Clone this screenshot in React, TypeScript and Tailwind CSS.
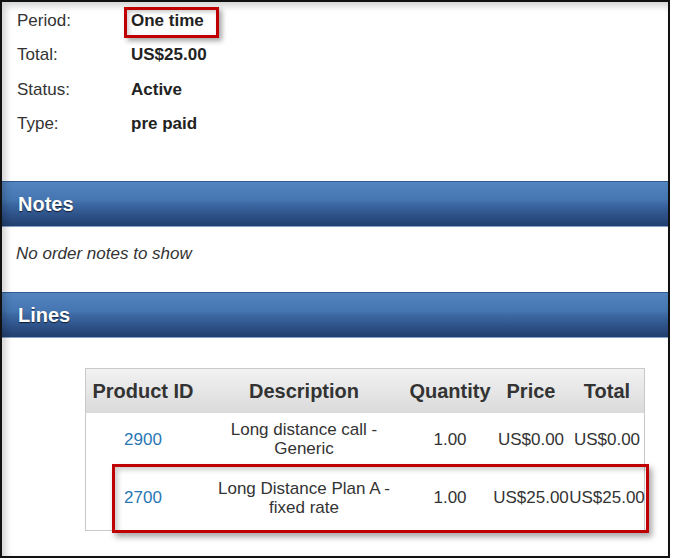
import React from "react";

const bar =
  "h-[46px] flex items-center pl-[16px] border-t border-t-[#2f5a92] border-b border-b-[#86a2c8] bg-[linear-gradient(to_bottom,#5384bf_0%,#4676b1_40%,#3b67a1_52%,#2e5289_75%,#223f6e_100%)] text-white font-bold text-[20px] [text-shadow:0_1px_1px_rgba(0,0,0,0.7)]";

function InfoRow({ label, value }: { label: string; value: string }) {
  return (
    <div className="h-[34.5px] flex items-center">
      <div className="w-[114px] text-[#333]">{label}</div>
      <div className="font-bold text-[#222]">{value}</div>
    </div>
  );
}

export default function App() {
  return (
    <div className="w-[673px] h-[560px] bg-white relative font-['Liberation_Sans',Arial,sans-serif] text-[17px]">
      <div className="w-[670px] h-[558px] border-2 border-[#111] flex flex-col relative overflow-hidden">
        <div className="h-[179px] pt-[1px] pl-[15px]">
          <InfoRow label="Period:" value="One time" />
          <InfoRow label="Total:" value="US$25.00" />
          <InfoRow label="Status:" value="Active" />
          <InfoRow label="Type:" value="pre paid" />
        </div>
        <div className={bar}>Notes</div>
        <div className="h-[65px] pl-[14px] pt-[16px] italic text-[#333] leading-[22px]">
          No order notes to show
        </div>
        <div className={bar}>Lines</div>
        <div className="flex-1 pl-[83px] pt-[30px]">
          <div className="w-[560px] border border-[#c9c9c9] text-[#333]">
            <div className="grid grid-cols-[114px_208px_84px_78px_74px] h-[44px] items-center bg-[linear-gradient(to_bottom,#f2f2f2,#dadada)] font-bold text-[20px] text-[#333] text-center">
              <div>Product ID</div>
              <div>Description</div>
              <div>Quantity</div>
              <div>Price</div>
              <div>Total</div>
            </div>
            <div className="grid grid-cols-[114px_208px_84px_78px_74px] h-[52px] items-center text-center leading-[19px] bg-white">
              <div className="text-[#2a77b5]">2900</div>
              <div>
                Long distance call -<br />Generic
              </div>
              <div>1.00</div>
              <div className="whitespace-nowrap">US$0.00</div>
              <div className="whitespace-nowrap">US$0.00</div>
            </div>
            <div className="grid grid-cols-[114px_208px_84px_78px_74px] h-[65px] items-center text-center leading-[19px] bg-white">
              <div className="text-[#2a77b5]">2700</div>
              <div>
                Long Distance Plan A -<br />fixed rate
              </div>
              <div>1.00</div>
              <div className="whitespace-nowrap flex justify-center overflow-visible">
                <span>US$25.00</span>
              </div>
              <div className="whitespace-nowrap flex justify-center overflow-visible">
                <span>US$25.00</span>
              </div>
            </div>
          </div>
        </div>
        <div className="absolute inset-0 pointer-events-none shadow-[inset_4px_4px_7px_rgba(0,0,0,0.18)]" />
      </div>
      <div className="absolute left-[124px] top-[7px] w-[95px] h-[31px] border-[3px] border-[#c00000] shadow-[3px_3px_5px_rgba(0,0,0,0.35),inset_2px_2px_4px_rgba(0,0,0,0.2)] pointer-events-none" />
      <div className="absolute left-[112px] top-[464px] w-[537px] h-[69px] border-[3px] border-[#c00000] shadow-[3px_4px_6px_rgba(0,0,0,0.35),inset_3px_3px_5px_rgba(0,0,0,0.2)] pointer-events-none" />
    </div>
  );
}
